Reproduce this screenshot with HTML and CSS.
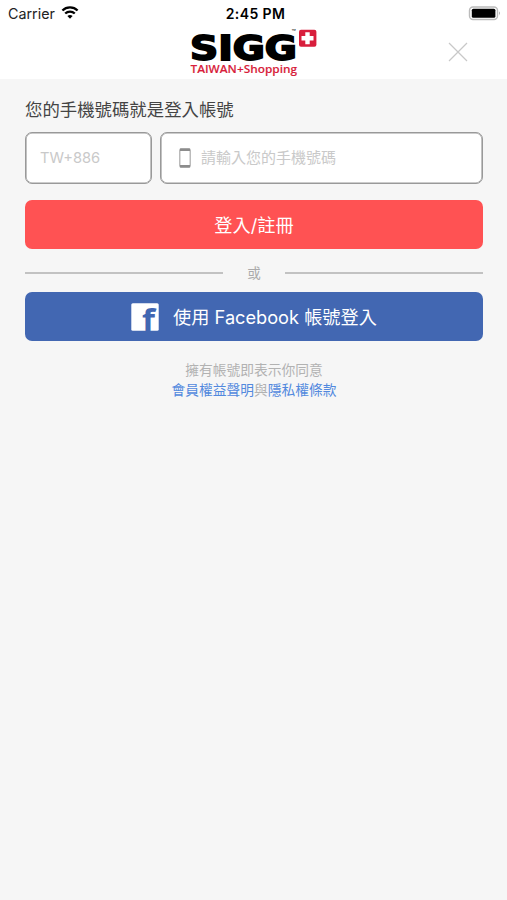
FILE: index.html
```
<!DOCTYPE html>
<html lang="zh-Hant">
<head>
	<meta charset="utf-8">
	<title>SIGG TAIWAN+Shopping</title>
	<link rel="stylesheet" href="styles.css">
</head>
<body>
	<div class="head">
		<div class="status">
			<div class="carrier">
				<span>Carrier</span>
				<svg class="wifi" width="18" height="14" viewBox="0 0 18 14">
					<path d="M1.4 5.5a10.8 10.8 0 0 1 15.2 0M4.2 8.5a6.9 6.9 0 0 1 9.6 0" fill="none" stroke="#000" stroke-width="2.3"/>
					<path d="M9 13.8l-2.6-2.7a3.8 3.8 0 0 1 5.2 0z"/>
				</svg>
			</div>
			<span class="time">2:45 PM</span>
			<svg class="battery" width="33" height="15" viewBox="0 0 33 15">
				<rect x="1.5" y="1" width="28" height="12.5" rx="3.5" fill="#fff" stroke="#bbb" stroke-width="1.4"/>
				<rect x="3.8" y="2.8" width="23.6" height="9" rx="1.5"/>
				<path d="M31 5.3q1.8 2.1 0 4.2z" fill="#888"/>
			</svg>
		</div>
		<div class="bar">
			<svg class="logo" width="130" height="48" viewBox="0 0 130 48">
				<text class="sigg" x="1" y="32.2" textLength="107" lengthAdjust="spacingAndGlyphs">SIGG</text>
				<text class="tm" x="102.5" y="6.5">™</text>
				<rect x="110" y="1.8" width="17.4" height="17" rx="2" fill="#d81e3c"/>
				<path d="M118.5 4.3v12M112.5 10.3h12" stroke="#fff" stroke-width="4.4"/>
				<text class="shopping" x="1.5" y="44.8" textLength="106.5" lengthAdjust="spacingAndGlyphs">TAIWAN+Shopping</text>
			</svg>
			<svg class="close" width="20" height="20" viewBox="0 0 20 20">
				<path d="M1 1l18 18M19 1L1 19" fill="none" stroke="#c8c8c8" stroke-width="1.2"/>
			</svg>
		</div>
	</div>
	<div class="main">
		<p class="title">您的手機號碼就是登入帳號</p>
		<div class="inputs">
			<div class="input code">TW+886</div>
			<div class="input phone">
				<svg width="12" height="20" viewBox="0 0 12 20">
					<rect x=".8" y=".8" width="10.4" height="18.4" rx="1.4" fill="#fff" stroke="#aaa" stroke-width="1.2"/>
					<path d="M1 1.7h10M1 18.2h10" stroke="#8c8c8c" stroke-width="2.6"/>
				</svg>
				<span>請輸入您的手機號碼</span>
			</div>
		</div>
		<div class="btn login"><span>登入/註冊</span></div>
		<div class="or"><span>或</span></div>
		<div class="btn facebook">
			<svg width="28" height="28" viewBox="0 0 28 28">
				<rect x=".3" y=".3" width="27.4" height="27.4" rx="1.5" fill="#fff"/>
				<text class="f" x="11" y="27.7" textLength="13" lengthAdjust="spacingAndGlyphs">f</text>
			</svg>
			<span>使用 Facebook 帳號登入</span>
		</div>
		<p class="terms">擁有帳號即表示你同意<br><a>會員權益聲明</a>與<a>隱私權條款</a></p>
	</div>
</body>
</html>
```
FILE: styles.css
```
body{
	margin: 0;
	min-height: 900px;
	background-color: #f6f6f6;
	font-family: Inter, "Noto Sans CJK TC", sans-serif;
	color: #444;
}
p{
	margin: 0;
}
.head{
	height: 79px;
	background-color: #fff;
}
.status{
	display: grid;
	grid-template-columns: 1fr auto 1fr;
	align-items: center;
	height: 27px;
	padding: 0 6px 0 8px;
	color: #000;
}
.carrier{
	display: flex;
	align-items: center;
	gap: 6px;
	font-size: 14.3px;
	color: #222;
}
.wifi{
	margin-top: -3px;
}
.time{
	font-size: 14px;
	font-weight: 600;
	letter-spacing: .4px;
	padding-left: 2px;
}
.battery{
	justify-self: end;
}
.bar{
	display: grid;
	grid-template-columns: 1fr 130px 1fr;
	height: 52px;
}
.logo{
	grid-column: 2;
	margin-top: 1px;
}
.sigg{
	font-family: "DejaVu Sans", sans-serif;
	font-size: 33px;
	font-weight: 700;
	stroke: #000;
	stroke-width: 1.8px;
}
.tm{
	font-size: 7px;
}
.shopping{
	font-family: "Open Sans", sans-serif;
	font-size: 10.5px;
	font-weight: 600;
	fill: #d81e3c;
	stroke: #d81e3c;
	stroke-width: .1px;
}
.close{
	justify-self: end;
	margin: 15px 39px 0 0;
}
.main{
	padding: 18px 24px 0 25px;
}
.title{
	font-size: 17.4px;
	line-height: 26px;
}
.inputs{
	display: flex;
	gap: 8px;
	margin-top: 9px;
}
.input{
	display: flex;
	align-items: center;
	box-sizing: border-box;
	height: 52px;
	border: 1px solid #999;
	box-shadow: inset 0 0 0 .6px #999;
	border-radius: 7px;
	background-color: #fff;
	font-size: 15px;
	color: #c9c9c9;
	padding-bottom: 1px;
}
.code{
	width: 127px;
	padding-left: 14px;
	font-size: 14.7px;
}
.phone{
	flex: 1;
	gap: 10px;
	padding-left: 18px;
}
.phone span{
	padding-bottom: 2px;
}
.btn{
	display: flex;
	align-items: center;
	justify-content: center;
	height: 49px;
	border-radius: 7px;
	font-size: 18.2px;
	color: #fff;
}
.btn span{
	padding-bottom: 2px;
}
.login{
	margin-top: 16px;
	background-color: #ff5253;
}
.or{
	display: flex;
	align-items: center;
	gap: 24px;
	height: 43px;
	font-size: 13.5px;
	color: #aaa;
}
.or::before,
.or::after{
	content: "";
	flex: 1;
	height: 2px;
	margin-top: 5px;
	background-color: #c2c2c2;
}
.or span{
	margin-top: 3px;
}
.facebook{
	gap: 14px;
	background-color: #4267b2;
}
.f{
	font-family: "Open Sans", sans-serif;
	font-size: 30px;
	font-weight: 700;
	fill: #4267b2;
}
.facebook svg{
	overflow: visible;
}
.terms{
	margin-top: 20px;
	text-align: center;
	font-size: 13.75px;
	line-height: 19.5px;
	color: #b2b2b2;
}
.terms a{
	color: #5289de;
}
```
